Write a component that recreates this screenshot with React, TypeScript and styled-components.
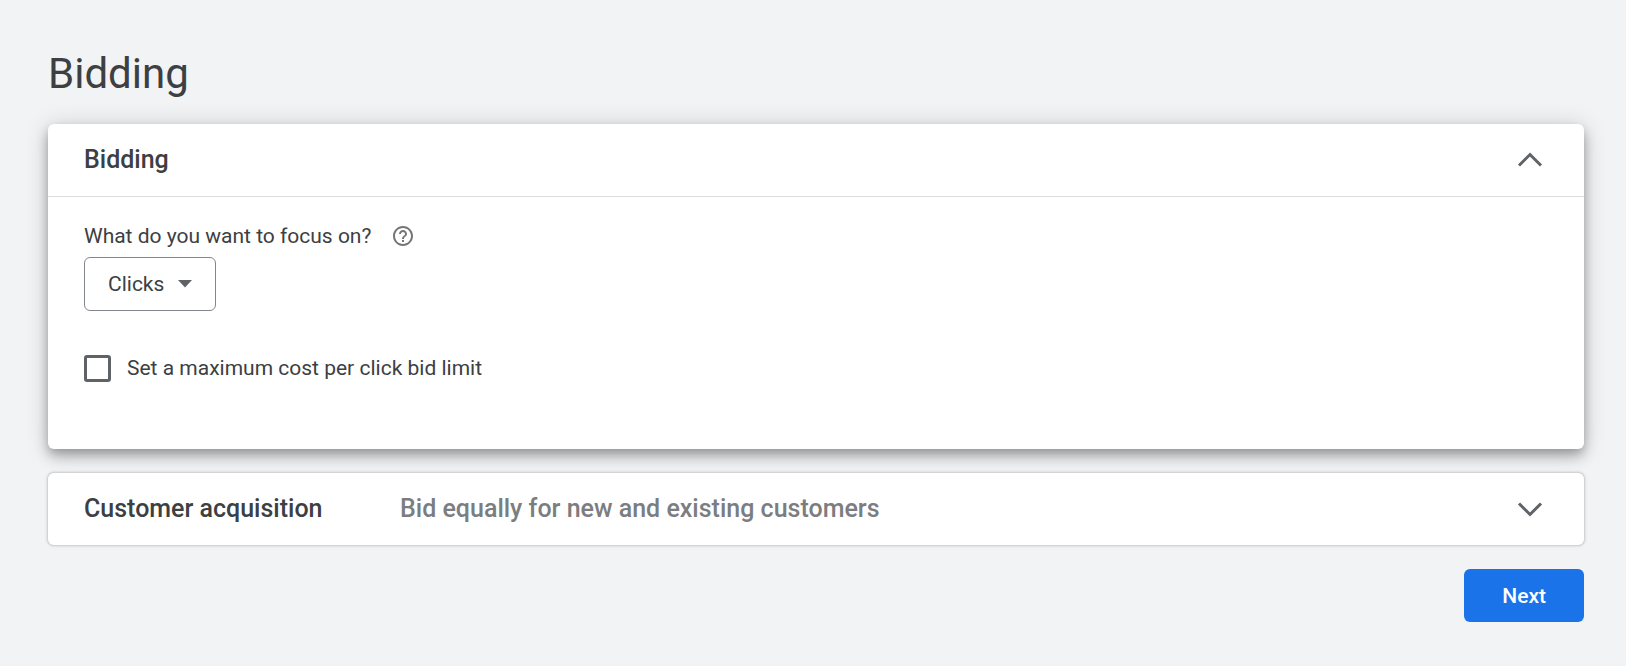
import React, { useState } from "react";
import styled, { createGlobalStyle } from "styled-components";

const GlobalStyle = createGlobalStyle`
  *, *::before, *::after {
    box-sizing: border-box;
  }
  body {
    margin: 0;
    background: #f1f3f4;
    color: #3c4043;
    font-family: Roboto, "Liberation Sans", sans-serif;
  }
`;

const Page = styled.main`
  display: flex;
  flex-direction: column;
  gap: 24px;
  padding: 48px 42px 44px 48px;
`;

const PageTitle = styled.h1`
  margin: 0;
  font-size: 42px;
  font-weight: 400;
  line-height: 52px;
`;

const Card = styled.section<{ $raised?: boolean }>`
  border-radius: 6px;
  background: #fff;
  box-shadow: ${({ $raised }) =>
    $raised
      ? "0 8px 14px rgba(0, 0, 0, 0.2), 0 2px 24px rgba(0, 0, 0, 0.16), 0 4px 8px -1px rgba(0, 0, 0, 0.16)"
      : "0 0 0 1px #d2d5d8, 0 0 3px 1px rgba(0, 0, 0, 0.16)"};
`;

const CardHeader = styled.button<{ $divided?: boolean }>`
  display: flex;
  align-items: center;
  width: 100%;
  min-height: ${({ $divided }) => ($divided ? 73 : 72)}px;
  padding: 0 41px 0 36px;
  border: 0;
  border-bottom: ${({ $divided }) => ($divided ? "1px solid #dadce0" : "0")};
  background: none;
  color: inherit;
  font: 500 25px/32px Roboto, "Liberation Sans", sans-serif;
  text-align: left;
  cursor: pointer;
`;

const CardTitle = styled.span`
  flex: 0 0 316px;
`;

const CardSummary = styled.span`
  color: #7b7d80;
`;

const Chevron = styled.svg`
  flex: none;
  width: 26px;
  height: 16px;
  margin-left: auto;
  fill: none;
  stroke: #5f6368;
  stroke-width: 3;
`;

const CardBody = styled.div`
  display: flex;
  flex-direction: column;
  align-items: flex-start;
  padding: 24px 36px 66px;
  font-size: 21px;
  line-height: 30px;
`;

const FieldHeading = styled.div`
  display: flex;
  align-items: center;
  gap: 22px;
`;

const HelpButton = styled.button`
  display: flex;
  padding: 0;
  border: 0;
  background: none;
  cursor: pointer;
`;

const SelectBox = styled.div`
  display: grid;
  align-items: center;
  margin: 6px 0 42px;
`;

const Select = styled.select`
  grid-area: 1 / 1;
  height: 54px;
  padding: 0 50px 0 23px;
  border: 1px solid #80868b;
  border-radius: 6px;
  appearance: none;
  background: #fff;
  color: inherit;
  font: 400 21px/30px Roboto, "Liberation Sans", sans-serif;
`;

const SelectArrow = styled.svg`
  grid-area: 1 / 1;
  justify-self: end;
  margin-right: 24px;
  fill: #5f6368;
  pointer-events: none;
`;

const CheckRow = styled.label`
  display: flex;
  align-items: center;
  gap: 16px;
`;

const Checkbox = styled.input`
  width: 27px;
  height: 27px;
  margin: 0;
  border: 3px solid #5f6368;
  border-radius: 3px;
  appearance: none;
  background: #fff;

  &:checked {
    background: #5f6368;
  }
`;

const NextButton = styled.button`
  align-self: flex-end;
  height: 53px;
  padding: 0 38px;
  border: 0;
  border-radius: 6px;
  background: #1a73e8;
  color: #fff;
  font: 500 21px/30px Roboto, "Liberation Sans", sans-serif;
  cursor: pointer;
`;

function ChevronIcon({ open }: { open: boolean }) {
  return (
    <Chevron viewBox="0 0 26 16" aria-hidden="true">
      <path d={open ? "M2 13.5 13 2.5l11 11" : "M2 2.5l11 11 11-11"} />
    </Chevron>
  );
}

export default function App() {
  const [biddingOpen, setBiddingOpen] = useState(true);

  return (
    <>
      <GlobalStyle />
      <Page>
        <PageTitle>Bidding</PageTitle>
        <Card $raised>
          <CardHeader
            type="button"
            $divided
            aria-expanded={biddingOpen}
            onClick={() => setBiddingOpen(!biddingOpen)}
          >
            <CardTitle>Bidding</CardTitle>
            <ChevronIcon open={biddingOpen} />
          </CardHeader>
          {biddingOpen && (
            <CardBody>
              <FieldHeading>
                <label htmlFor="focus">What do you want to focus on?</label>
                <HelpButton type="button" aria-label="Help">
                  <svg width="20" height="20" viewBox="2 2 20 20" fill="#757575" aria-hidden="true">
                    <path d="M11 18h2v-2h-2v2zm1-16C6.48 2 2 6.48 2 12s4.48 10 10 10 10-4.48 10-10S17.52 2 12 2zm0 18c-4.41 0-8-3.59-8-8s3.59-8 8-8 8 3.59 8 8-3.59 8-8 8zm0-14c-2.21 0-4 1.79-4 4h2c0-1.1.9-2 2-2s2 .9 2 2c0 2-3 1.75-3 5h2c0-2.25 3-2.5 3-5 0-2.21-1.79-4-4-4z" />
                  </svg>
                </HelpButton>
              </FieldHeading>
              <SelectBox>
                <Select id="focus">
                  <option>Clicks</option>
                </Select>
                <SelectArrow width="14" height="8" viewBox="0 0 14 8" aria-hidden="true">
                  <path d="M0 0h14L7 7.5z" />
                </SelectArrow>
              </SelectBox>
              <CheckRow>
                <Checkbox type="checkbox" />
                Set a maximum cost per click bid limit
              </CheckRow>
            </CardBody>
          )}
        </Card>
        <Card>
          <CardHeader type="button" aria-expanded={false}>
            <CardTitle>Customer acquisition</CardTitle>
            <CardSummary>Bid equally for new and existing customers</CardSummary>
            <ChevronIcon open={false} />
          </CardHeader>
        </Card>
        <NextButton type="button">Next</NextButton>
      </Page>
    </>
  );
}
